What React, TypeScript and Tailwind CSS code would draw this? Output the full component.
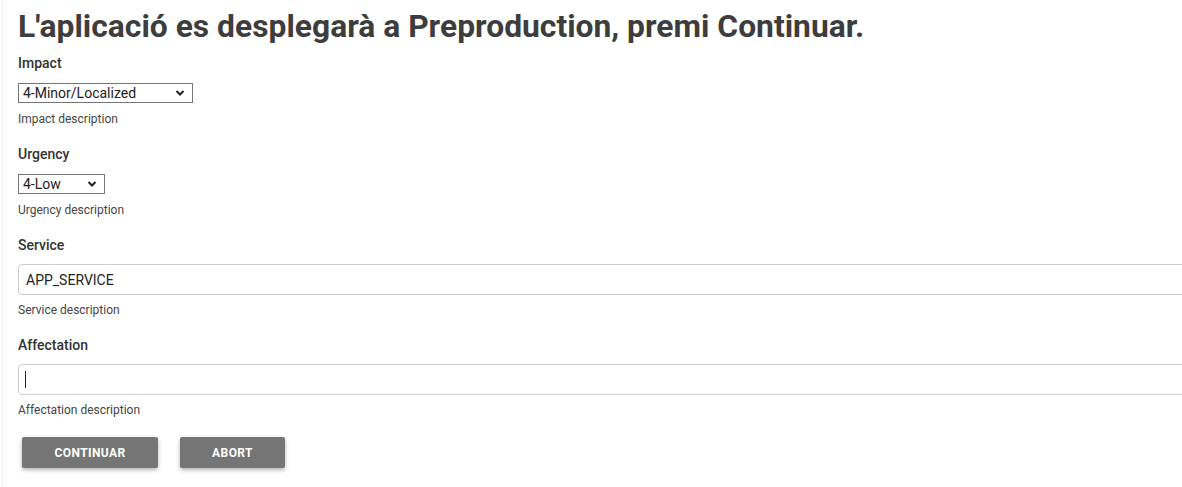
import React from 'react';

const font = { fontFamily: 'Roboto, "Liberation Sans", sans-serif' };

const Chevron: React.FC = () => (
  <svg className="pointer-events-none absolute right-[8px] top-1/2 h-[8px] w-[10px] -translate-y-1/2" viewBox="0 0 10 8" fill="none">
    <path d="M1.5 2l3.5 3.5L8.5 2" stroke="#222" strokeWidth={2} />
  </svg>
);

const SelectField: React.FC<{ label: string; value: string; options: string[]; width: string; description: string }> = ({
  label,
  value,
  options,
  width,
  description,
}) => (
  <div className="mb-[17px]">
    <label className="block text-[14px] font-medium leading-[20px] text-[#333]">{label}</label>
    <div className={`relative mt-[10px] ${width}`}>
      <select
        defaultValue={value}
        className="block h-[20px] w-full appearance-none border border-[#767676] bg-white pl-[4px] text-[14px] leading-[18px] text-[#222] outline-none"
      >
        {options.map((o) => (
          <option key={o}>{o}</option>
        ))}
      </select>
      <Chevron />
    </div>
    <p className="mt-[8px] text-[12px] leading-[16px] text-[#444]">{description}</p>
  </div>
);

const TextField: React.FC<{ label: string; value: string; description: string; caret?: boolean }> = ({
  label,
  value,
  description,
  caret,
}) => (
  <div className="mb-[17px]">
    <label className="block text-[14px] font-medium leading-[20px] text-[#333]">{label}</label>
    <div className="relative mt-[9px] w-[1200px]">
      <input
        defaultValue={value}
        className="block h-[31px] w-full rounded-[4px] border border-[#cccccc] bg-white px-[7px] text-[14px] text-[#222] outline-none"
      />
      {caret && <span className="absolute left-[7px] top-[7px] h-[17px] w-px bg-[#222]" />}
    </div>
    <p className="mt-[7px] text-[12px] leading-[16px] text-[#444]">{description}</p>
  </div>
);

const App: React.FC = () => {
  return (
    <div className="h-[487px] w-[1182px] overflow-hidden bg-white" style={font}>
      <div className="ml-[2px] h-full border-l border-[#edf2f4] pl-[15px] pt-[6px]">
        <h1 className="whitespace-nowrap text-[31.8px] font-bold leading-[40px] text-[#3d3d3d]">
          L'aplicació es desplegarà a Preproduction, premi Continuar.
        </h1>

        <div className="mt-[7px]">
          <SelectField
            label="Impact"
            value="4-Minor/Localized"
            options={['1-Extensive/Widespread', '2-Significant/Large', '3-Moderate/Limited', '4-Minor/Localized']}
            width="w-[175px]"
            description="Impact description"
          />
          <SelectField
            label="Urgency"
            value="4-Low"
            options={['1-Critical', '2-High', '3-Medium', '4-Low']}
            width="w-[87px]"
            description="Urgency description"
          />
          <TextField label="Service" value="APP_SERVICE" description="Service description" />
          <TextField label="Affectation" value="" description="Affectation description" caret />
        </div>

        <div className="ml-[4px] mt-[19px] flex gap-[22px]">
          <button className="h-[31px] w-[136px] rounded-[2px] bg-[#757575] text-[12px] font-bold tracking-[0.4px] text-white shadow-[0_2px_4px_rgba(0,0,0,0.3)]">
            CONTINUAR
          </button>
          <button className="h-[31px] w-[105px] rounded-[2px] bg-[#757575] text-[12px] font-bold tracking-[0.4px] text-white shadow-[0_2px_4px_rgba(0,0,0,0.3)]">
            ABORT
          </button>
        </div>
      </div>
    </div>
  );
};

export default App;
